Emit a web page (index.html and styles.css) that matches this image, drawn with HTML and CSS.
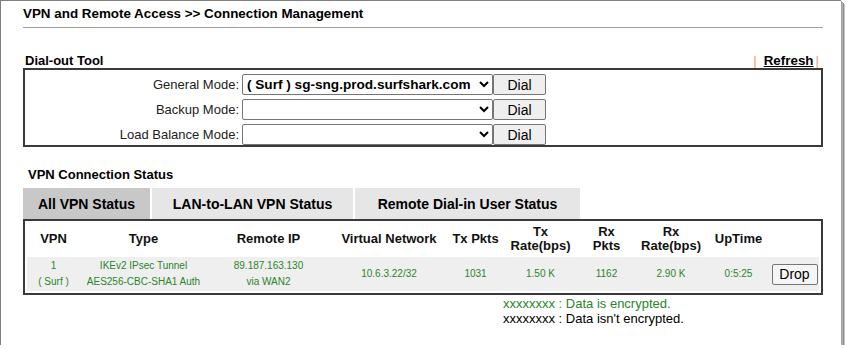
FILE: index.html
```html
<!DOCTYPE html>
<html lang="en">
<head>
    <meta charset="UTF-8">
    <title>VPN and Remote Access - Connection Management</title>
    <link rel="stylesheet" href="styles.css">
</head>
<body>
    <div class="frame">
        <div class="page-title">VPN and Remote Access &gt;&gt; Connection Management</div>

        <div class="section-head">
            <span class="section-title">Dial-out Tool</span>
            <span class="refresh"><span class="pipe">|</span><a href="#">Refresh</a><span class="pipe">|</span></span>
        </div>
        <div class="dial-box">
            <div class="dial-row">
                <label>General Mode:</label>
                <select class="mode-select bold">
                    <option>( Surf ) sg-sng.prod.surfshark.com</option>
                </select>
                <button class="btn">Dial</button>
            </div>
            <div class="dial-row">
                <label>Backup Mode:</label>
                <select class="mode-select"><option></option></select>
                <button class="btn">Dial</button>
            </div>
            <div class="dial-row">
                <label>Load Balance Mode:</label>
                <select class="mode-select"><option></option></select>
                <button class="btn">Dial</button>
            </div>
        </div>

        <div class="status-title">VPN Connection Status</div>
        <div class="tabs">
            <div class="tab active">All VPN Status</div>
            <div class="tab wide">LAN-to-LAN VPN Status</div>
            <div class="tab wider">Remote Dial-in User Status</div>
        </div>
        <div class="status-box">
            <table class="status-table">
                <colgroup>
                    <col style="width:53px"><col style="width:127px"><col style="width:123px">
                    <col style="width:118px"><col style="width:55px"><col style="width:75px">
                    <col style="width:57px"><col style="width:72px"><col style="width:63px">
                    <col style="width:49px">
                </colgroup>
                <tr class="head">
                    <th>VPN</th>
                    <th>Type</th>
                    <th>Remote IP</th>
                    <th>Virtual Network</th>
                    <th>Tx Pkts</th>
                    <th>Tx<br>Rate(bps)</th>
                    <th>Rx<br>Pkts</th>
                    <th>Rx<br>Rate(bps)</th>
                    <th>UpTime</th>
                    <th></th>
                </tr>
                <tr class="data">
                    <td>1<br>( Surf )</td>
                    <td>IKEv2 IPsec Tunnel<br>AES256-CBC-SHA1 Auth</td>
                    <td>89.187.163.130<br>via WAN2</td>
                    <td>10.6.3.22/32</td>
                    <td>1031</td>
                    <td>1.50 K</td>
                    <td>1162</td>
                    <td>2.90 K</td>
                    <td>0:5:25</td>
                    <td><button class="btn drop">Drop</button></td>
                </tr>
            </table>
        </div>
        <div class="legend">
            <div class="enc">xxxxxxxx : Data is encrypted.</div>
            <div>xxxxxxxx : Data isn't encrypted.</div>
        </div>
    </div>
</body>
</html>
```

FILE: styles.css
```css
* {
    margin: 0;
    padding: 0;
    box-sizing: border-box;
}
body {
    font-family: 'Liberation Sans', Arial, sans-serif;
    font-size: 13px;
    color: #000;
    background: #fff;
}
.frame {
    width: 841px;
    height: 345px;
    border-left: 1px solid #808080;
    border-top: 1px solid #808080;
    box-shadow: 1px 1px 0 #a0a0a0, 2px 2px 0 #b4b4b4, 3px 3px 0 #8a8a8a, 4px 4px 0 #c8c8c8;
    padding: 5px 18px 0 22px;
}
.page-title {
    font-weight: bold;
    font-size: 13.4px;
    height: 22px;
    border-bottom: 1px solid #a0a0a0;
}
.section-head {
    display: flex;
    justify-content: space-between;
    align-items: flex-end;
    margin-top: 23px;
    padding: 0 4px 0 2px;
    height: 17px;
}
.section-title {
    font-weight: bold;
}
.refresh {
    font-weight: bold;
    font-size: 13.4px;
}
.refresh a {
    color: #000;
    padding: 0 2px 0 7px;
}
.pipe {
    color: #ff9470;
    font-weight: normal;
}
.dial-box {
    border: 2px solid #3a3a3a;
    height: 79px;
    padding-top: 2px;
}
.dial-row {
    display: flex;
    align-items: center;
    height: 25px;
}
.dial-row label {
    width: 217px;
    text-align: right;
    padding-right: 3px;
    color: #222;
}
.mode-select {
    width: 251px;
    height: 21px;
    font-family: 'Liberation Sans', Arial, sans-serif;
    font-size: 13.6px;
    border: 1px solid #767676;
    border-radius: 2px;
    background: #fff;
    color: #000;
}
.mode-select.bold {
    font-weight: bold;
}
.btn {
    font-family: 'Liberation Sans', Arial, sans-serif;
    font-size: 14px;
    width: 53px;
    height: 21px;
    background: #efefef;
    border: 1px solid #767676;
    border-radius: 2px;
    color: #000;
}
.status-title {
    font-weight: bold;
    margin-top: 20px;
    padding-left: 5px;
    height: 18px;
}
.tabs {
    display: flex;
    gap: 2px;
    margin-top: 3px;
    height: 31px;
}
.tab {
    width: 127px;
    background: #e6e6e6;
    font-weight: bold;
    font-size: 14px;
    display: flex;
    align-items: center;
    justify-content: center;
}
.tab.active {
    background: #c8c8c8;
}
.tab.wide {
    width: 201px;
}
.tab.wider {
    width: 225px;
}
.status-box {
    border: 2px solid #3a3a3a;
    height: 76px;
    padding: 0 2px;
}
.status-table {
    border-collapse: collapse;
    table-layout: fixed;
    width: 792px;
}
.status-table th {
    font-size: 13px;
    height: 36px;
    line-height: 14px;
    font-weight: bold;
    color: #111;
}
.status-table td {
    background: #efefef;
    height: 34px;
    text-align: center;
    font-size: 10px;
    line-height: 16px;
    color: #2a852a;
}
.btn.drop {
    width: 46px;
    height: 21px;
    font-size: 14px;
    background: #f5f5f5;
}
.legend {
    padding-left: 480px;
    margin-top: 1px;
    font-size: 13px;
    line-height: 15px;
}
.legend .enc {
    color: #2a852a;
}
```
